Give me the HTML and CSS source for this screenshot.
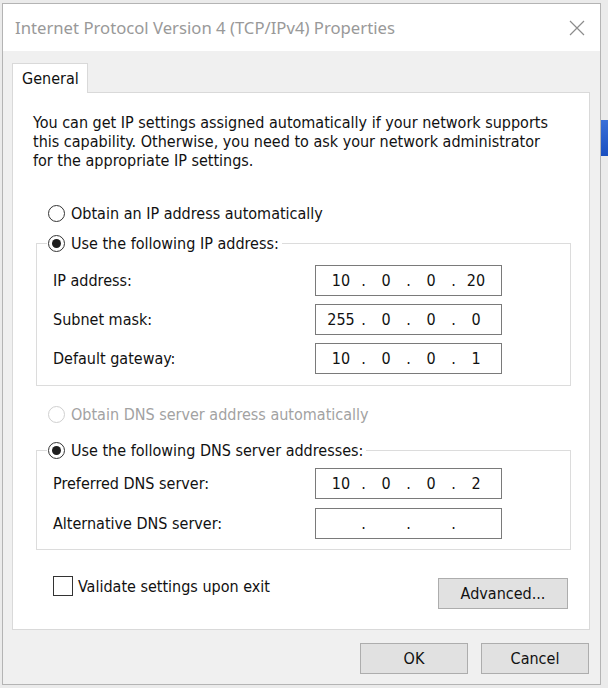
FILE: index.html
```html
<!DOCTYPE html>
<html lang="en">
<head>
  <meta charset="UTF-8">
  <title>Internet Protocol Version 4 (TCP/IPv4) Properties</title>
  <link rel="stylesheet" href="styles.css">
</head>
<body>
  <div class="desk-bit"></div>

  <div class="dialog">
    <div class="titlebar">
      <span class="title">Internet Protocol Version 4 (TCP/IPv4) Properties</span>
      <svg class="close" width="16" height="16" viewBox="0 0 16 16">
        <path d="M1 1 L15 15 M15 1 L1 15" stroke="#8c8c8c" stroke-width="1.2" fill="none"/>
      </svg>
    </div>

    <div class="content">
      <div class="tab">General</div>
      <div class="panel">
        <p class="intro">You can get IP settings assigned automatically if your network supports<br>this capability. Otherwise, you need to ask your network administrator<br>for the appropriate IP settings.</p>

        <div class="radio radio-first"><span class="dot"></span>Obtain an IP address automatically</div>

        <fieldset class="group group-ip">
          <legend><div class="radio"><span class="dot checked"></span>Use the following IP address:</div></legend>
          <div class="rows">
            <label>IP address:</label>
            <div class="ipbox"><span>10</span><i>.</i><span>0</span><i>.</i><span>0</span><i>.</i><span>20</span></div>
            <label>Subnet mask:</label>
            <div class="ipbox"><span>255</span><i>.</i><span>0</span><i>.</i><span>0</span><i>.</i><span>0</span></div>
            <label>Default gateway:</label>
            <div class="ipbox"><span>10</span><i>.</i><span>0</span><i>.</i><span>0</span><i>.</i><span>1</span></div>
          </div>
        </fieldset>

        <div class="radio radio-dns disabled"><span class="dot"></span>Obtain DNS server address automatically</div>

        <fieldset class="group group-dns">
          <legend><div class="radio"><span class="dot checked"></span>Use the following DNS server addresses:</div></legend>
          <div class="rows">
            <label>Preferred DNS server:</label>
            <div class="ipbox"><span>10</span><i>.</i><span>0</span><i>.</i><span>0</span><i>.</i><span>2</span></div>
            <label>Alternative DNS server:</label>
            <div class="ipbox"><span></span><i>.</i><span></span><i>.</i><span></span><i>.</i><span></span></div>
          </div>
        </fieldset>

        <div class="panel-footer">
          <div class="check"><span class="box"></span>Validate settings upon exit</div>
          <button class="btn btn-advanced">Advanced...</button>
        </div>
      </div>

      <div class="buttons">
        <button class="btn">OK</button>
        <button class="btn">Cancel</button>
      </div>
    </div>
  </div>
</body>
</html>
```

FILE: styles.css
```css
body {
  margin: 0;
  background-color: #ebebeb;
  font-family: 'DejaVu Sans Condensed', 'DejaVu Sans', sans-serif;
  font-size: 16px;
  color: #111;
}
.desk-bit {
  position: absolute;
  left: 601px;
  top: 120px;
  width: 7px;
  height: 36px;
  background: linear-gradient(#3a6fd8, #1a4fc0);
}
.dialog {
  margin: 3px 0 0 2px;
  width: 597px;
  height: 680px;
  border: 1px solid #b4b4b4;
  background-color: #f0f0f0;
}
.titlebar {
  height: 47px;
  background-color: #fff;
  display: flex;
  justify-content: space-between;
  align-items: center;
  padding: 0 15px 0 12px;
}
.title {
  font-family: 'Noto Sans', sans-serif;
  font-size: 16.7px;
  color: #999;
}
.content {
  padding: 12px 10px 0 9px;
}
.tab {
  position: relative;
  z-index: 1;
  width: 76px;
  height: 30px;
  box-sizing: border-box;
  margin-bottom: -1px;
  padding: 5px 0 0 9px;
  background-color: #fff;
  border: 1px solid #d9d9d9;
  border-bottom: none;
}
.panel {
  height: 538px;
  box-sizing: border-box;
  background-color: #fff;
  border: 1px solid #d9d9d9;
}
.intro {
  margin: 20px 0 0 20px;
  line-height: 19px;
}
.radio {
  display: flex;
  align-items: center;
  height: 20px;
  gap: 6px;
}
.radio-first {
  margin: 33px 0 0 35px;
}
.radio-dns {
  margin: 18px 0 0 35px;
}
.dot {
  width: 17px;
  height: 17px;
  box-sizing: border-box;
  border: 1px solid #333;
  border-radius: 50%;
  display: flex;
  justify-content: center;
  align-items: center;
}
.dot.checked::after {
  content: "";
  width: 9px;
  height: 9px;
  border-radius: 50%;
  background-color: #1e1e1e;
}
.disabled {
  color: #a2a2a2;
}
.disabled .dot {
  border-color: #cfcfcf;
}
.group {
  margin: 0 18px 0 23px;
  padding: 0 0 11px 10px;
  border: 1px solid #dcdcdc;
}
.group legend {
  padding: 0 3px 0 1px;
}
.group-ip {
  margin-top: 10px;
}
.group-dns {
  margin-top: 16px;
  padding-bottom: 10px;
}
.rows {
  display: grid;
  grid-template-columns: 268px 187px;
  row-gap: 8px;
  align-items: center;
  margin-top: 12px;
}
.group-dns .rows {
  margin-top: 8px;
  row-gap: 9px;
}
.rows label {
  padding-left: 6px;
}
.ipbox {
  height: 31px;
  box-sizing: border-box;
  border: 1px solid #7a7a7a;
  padding: 0 8px;
  display: flex;
  align-items: center;
}
.ipbox span {
  width: 34px;
  text-align: center;
}
.ipbox i {
  width: 11px;
  font-style: normal;
  text-align: center;
}
.panel-footer {
  display: flex;
  justify-content: space-between;
  align-items: flex-start;
  margin: 26px 21px 0 40px;
}
.check {
  display: flex;
  align-items: center;
  gap: 5px;
  height: 20px;
}
.box {
  width: 20px;
  height: 20px;
  box-sizing: border-box;
  border: 1px solid #333;
}
.btn {
  height: 31px;
  width: 108px;
  background-color: #e1e1e1;
  border: 1px solid #adadad;
  font-family: inherit;
  font-size: 16px;
  color: #111;
  padding: 0;
}
.btn-advanced {
  width: 130px;
  margin-top: 2px;
}
.buttons {
  display: flex;
  justify-content: flex-end;
  gap: 13px;
  margin-top: 13px;
  padding-right: 1px;
}
```
